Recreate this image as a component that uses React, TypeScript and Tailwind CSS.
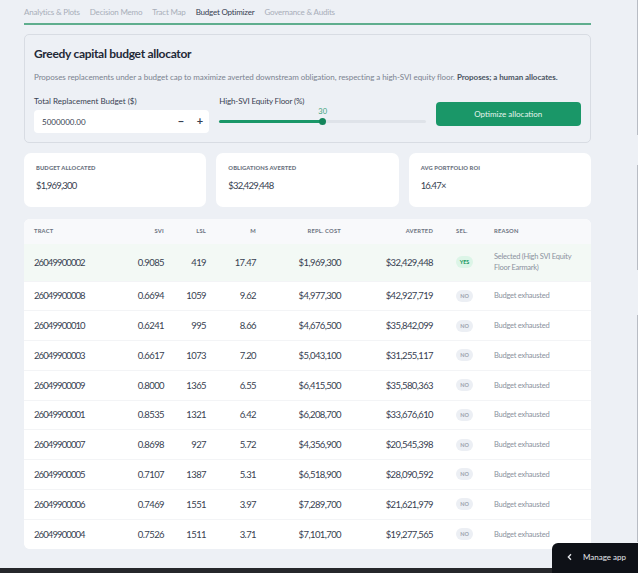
const rows = [
  ['26049900008', '0.6694', '1059', '9.62', '$4,977,300', '$42,927,719'],
  ['26049900010', '0.6241', '995', '8.66', '$4,676,500', '$35,842,099'],
  ['26049900003', '0.6617', '1073', '7.20', '$5,043,100', '$31,255,117'],
  ['26049900009', '0.8000', '1365', '6.55', '$6,415,500', '$35,580,363'],
  ['26049900001', '0.8535', '1321', '6.42', '$6,208,700', '$33,676,610'],
  ['26049900007', '0.8698', '927', '5.72', '$4,356,900', '$20,545,398'],
  ['26049900005', '0.7107', '1387', '5.31', '$6,518,900', '$28,090,592'],
  ['26049900006', '0.7469', '1551', '3.97', '$7,289,700', '$21,621,979'],
  ['26049900004', '0.7526', '1511', '3.71', '$7,101,700', '$19,277,565'],
];

const tabs = ['Analytics & Plots', 'Decision Memo', 'Tract Map', 'Budget Optimizer', 'Governance & Audits'];

function Metric({ label, value }: { label: string; value: string }) {
  return (
    <div className="h-[54px] flex-1 rounded-[7px] bg-white pl-[12px] pt-[10px]">
      <div className="text-[5.8px] font-black leading-[10px] tracking-[0.1px] text-[#6b7280]">{label}</div>
      <div className="mt-[6px] text-[9.5px] leading-[14px] tracking-[-0.8px] text-[#374151]">{value}</div>
    </div>
  );
}

function RowCells({ cells, selected }: { cells: string[]; selected?: boolean }) {
  return (
    <>
      <td className="pl-[10px] pt-[1px] text-[9.5px] tracking-[-0.9px] text-[#374151]">{cells[0]}</td>
      <td className="pt-[1px] text-right text-[9.5px] tracking-[-0.6px] text-[#374151]">{cells[1]}</td>
      <td className="pt-[1px] text-right text-[9.5px] tracking-[-0.6px] text-[#374151]">{cells[2]}</td>
      <td className="pt-[1px] text-right text-[9.5px] tracking-[-0.6px] text-[#374151]">{cells[3]}</td>
      <td className="pt-[1px] text-right text-[9.5px] tracking-[-0.6px] text-[#374151]">{cells[4]}</td>
      <td className="pt-[1px] text-right text-[9.5px] tracking-[-0.6px] text-[#374151]">{cells[5]}</td>
      <td className="pl-[23px]">
        <span className={`flex h-[12px] w-[17px] items-center justify-center rounded-full text-[5.5px] font-bold ${selected ? 'bg-[#dcf5e7] text-[#15965f]' : 'bg-[#eceff4] text-[#9ca3af]'}`}>
          {selected ? 'YES' : 'NO'}
        </span>
      </td>
      <td className="pl-[11px] pr-[15px] text-[7.5px] leading-[11px] tracking-[-0.25px] text-[#8b929e]">
        {selected ? 'Selected (High SVI Equity Floor Earmark)' : 'Budget exhausted'}
      </td>
    </>
  );
}

export default function App() {
  return (
    <div className="relative flex h-[573px] w-[638px] flex-col overflow-hidden bg-[#edf0f5] font-['Lato',sans-serif]">
      <div className="flex-1 pl-[24px] pr-[47px]">
        {/* Tabs */}
        <div className="flex h-[25px] gap-[10px] border-b-2 border-[#5fae8e] pt-[6px] text-[8px] leading-[12px] tracking-[-0.2px] text-[#a8aeb9]">
          {tabs.map((t) => (
            <span key={t} className={t === 'Budget Optimizer' ? 'text-[#374151]' : ''}>{t}</span>
          ))}
        </div>

        {/* Allocator panel */}
        <div className="mt-[9px] h-[109px] rounded-[5px] border border-[#d8dce3] px-[9px] pt-[10px]">
          <h2 className="text-[12px] font-bold leading-[17px] tracking-[-0.3px] text-[#1f2937]">Greedy capital budget allocator</h2>
          <p className="mt-[9px] whitespace-nowrap text-[8px] leading-[12px] tracking-[-0.06px] text-[#7b8390]">
            Proposes replacements under a budget cap to maximize averted downstream obligation, respecting a high-SVI equity floor. <b className="text-[#4b5563]">Proposes; a human allocates.</b>
          </p>
          <div className="mt-[12px] flex gap-[10px]">
            <div className="w-[176px]">
              <div className="text-[8px] leading-[12px] text-[#374151]">Total Replacement Budget ($)</div>
              <div className="mt-[3px] flex h-[23px] items-center rounded-[4px] bg-white pl-[8px] text-[8px] text-[#374151]">
                <span className="flex-1">5000000.00</span>
                <span className="w-[19px] text-center text-[11px] font-bold">−</span>
                <span className="w-[19px] text-center text-[11px] font-bold">+</span>
              </div>
            </div>
            <div className="w-[207px]">
              <div className="text-[8px] leading-[12px] tracking-[-0.15px] text-[#374151]">High-SVI Equity Floor (%)</div>
              <div className="pl-[99px] text-[7.5px] leading-[9px] text-[#3fa37c]">30</div>
              <div className="relative mt-[4px] h-[3px] rounded-full bg-[#dfe3e9]">
                <div className="h-[3px] w-[103px] rounded-full bg-[#1a9768]" />
                <div className="absolute left-[100px] top-[-2px] h-[7px] w-[7px] rounded-full bg-[#14855b]" />
              </div>
            </div>
            <button className="mt-[7px] h-[24px] w-[146px] rounded-[4px] bg-[#1a9768] text-[8px] text-[#e6f5ee]">Optimize allocation</button>
          </div>
        </div>

        {/* Metrics */}
        <div className="mt-[10px] flex gap-[10px]">
          <Metric label="BUDGET ALLOCATED" value="$1,969,300" />
          <Metric label="OBLIGATIONS AVERTED" value="$32,429,448" />
          <Metric label="AVG PORTFOLIO ROI" value="16.47×" />
        </div>

        {/* Results table */}
        <div className="mt-[12px] overflow-hidden rounded-[6px] bg-white">
          <table className="w-full table-fixed border-collapse">
            <colgroup>
              <col className="w-[81px]" />
              <col className="w-[59px]" />
              <col className="w-[42px]" />
              <col className="w-[50px]" />
              <col className="w-[85px]" />
              <col className="w-[92px]" />
              <col className="w-[50px]" />
              <col />
            </colgroup>
            <thead>
              <tr className="h-[25px] bg-[#f8f9fb] text-[5.8px] font-black tracking-[0.2px] text-[#6b7280]">
                <th className="pl-[10px] text-left">TRACT</th>
                <th className="text-right">SVI</th>
                <th className="text-right">LSL</th>
                <th className="text-right">M</th>
                <th className="text-right">REPL. COST</th>
                <th className="text-right">AVERTED</th>
                <th className="pl-[23px] text-left">SEL.</th>
                <th className="pl-[11px] text-left">REASON</th>
              </tr>
            </thead>
            <tbody>
              <tr className="h-[37px] bg-[#f3f9f5]">
                <RowCells selected cells={['26049900002', '0.9085', '419', '17.47', '$1,969,300', '$32,429,448']} />
              </tr>
              {rows.map((r) => (
                <tr key={r[0]} className="h-[29.75px] border-t border-[#f3f4f6] bg-white">
                  <RowCells cells={r} />
                </tr>
              ))}
            </tbody>
          </table>
        </div>
      </div>

      {/* Bottom bar */}
      <div className="h-[5px] bg-[#26272b]" />

      {/* Window edge */}
      <div className="absolute right-0 top-0 flex h-[542px] w-px flex-col">
        <div className="h-[135px] bg-[#b8bcc4]" />
        <div className="h-[30px]" />
        <div className="h-[105px] bg-[#b8bcc4]" />
        <div className="h-[45px]" />
        <div className="flex-1 bg-[#b8bcc4]" />
      </div>

      <div className="absolute bottom-0 right-0 flex h-[30px] w-[86px] items-center rounded-tl-[6px] bg-[#0e1117] pb-[3px] pl-[14px] text-[8px] text-[#e5e7eb]">
        <svg className="h-[8px] w-[8px]" viewBox="0 0 24 24" fill="none" stroke="currentColor" strokeWidth="4"><path d="M15 4 7 12l8 8" /></svg>
        <span className="ml-[9px]">Manage app</span>
      </div>
    </div>
  );
}
